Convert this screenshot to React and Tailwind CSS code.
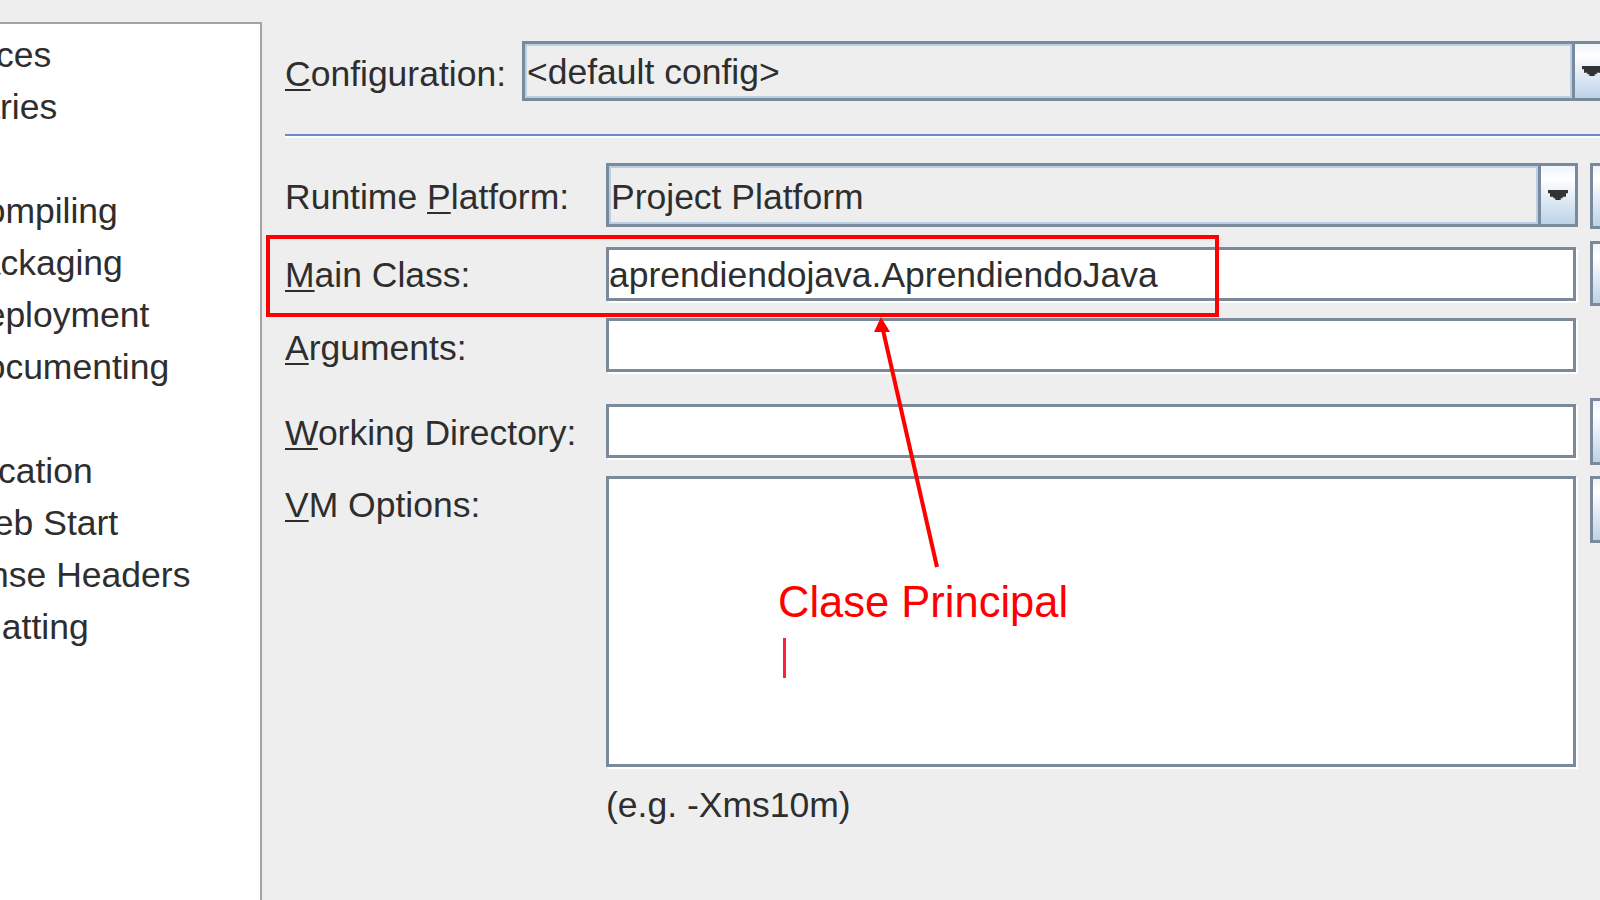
import React from 'react';

// category tree on the left, clipped by the panel edge
const categories = [
    { label: 'Sources', indent: '-ml-[79px]' },
    { label: 'Libraries', indent: '-ml-[79px]' },
    { label: 'Build', indent: '-ml-[80px]' },
    { label: 'Compiling', indent: '-ml-[40px]' },
    { label: 'Packaging', indent: '-ml-[43px]' },
    { label: 'Deployment', indent: '-ml-[40px]' },
    { label: 'Documenting', indent: '-ml-[40px]' },
    { label: 'Run', indent: '-ml-[80px]' },
    { label: 'Application', indent: '-ml-[81px]' },
    { label: 'Web Start', indent: '-ml-[39px]' },
    { label: 'License Headers', indent: '-ml-[76px]' },
    { label: 'Formatting', indent: '-ml-[81px]' },
];

const Mnemonic = ({ children }) => (
    <span className="underline decoration-2 underline-offset-[3px]">{children}</span>
);

const DownArrow = () => (
    <svg width="20" height="10" viewBox="0 0 20 10">
        <polygon
            fill="#333333"
            points="0,0 20,0 20,3.3 18,3.3 18,6.7 14.7,6.7 14.7,8.3 12.7,8.3 12.7,10 7.3,10 7.3,8.3 5.3,8.3 5.3,6.7 2,6.7 2,3.3 0,3.3"
        />
    </svg>
);

const ComboButton = () => (
    <div className="w-[37px] shrink-0 border-l-[3px] border-[#7b8a9a] bg-[linear-gradient(to_bottom,#eef4fa,#ffffff_22%,#bcd2e9)] flex items-center justify-center">
        <DownArrow />
    </div>
);

const SideButton = ({ height }) => (
    <div className={`ml-[12px] w-[40px] shrink-0 border-[3px] border-r-0 border-[#7b8a9a] bg-[linear-gradient(to_bottom,#eef4fa,#ffffff_22%,#bcd2e9)] ${height}`}></div>
);

const field = 'w-[970px] shrink-0 border-[3px] border-[#7b8a9a] bg-white shadow-[2px_2px_0_0_#ffffff]';

export default function App() {
    return (
        <div className="relative w-[1600px] h-[900px] overflow-hidden bg-[#eeeeee] flex font-['Liberation_Sans',Arial,sans-serif] text-[35.5px] text-[#2e2e2e]">
            {/* Categories */}
            <div className="w-[262px] shrink-0 mt-[22px] bg-white border-t-2 border-r-2 border-[#a3a3a3] pt-[5px] overflow-hidden">
                {categories.map((c) => (
                    <div key={c.label} className={`h-[52px] leading-[52px] whitespace-nowrap ${c.indent}`}>
                        {c.label}
                    </div>
                ))}
            </div>

            {/* Run settings */}
            <div className="flex-1 min-w-0 overflow-hidden pt-[41px] pl-[23px] leading-[40px]">
                <div className="flex items-start h-[60px]">
                    <div className="w-[237px] shrink-0 mt-[13px] whitespace-nowrap">
                        <Mnemonic>C</Mnemonic>onfiguration:
                    </div>
                    <div className="flex shrink-0 w-[1100px] h-[60px] border-[3px] border-[#7b8a9a]">
                        <div className="w-[1047px] shrink-0 border-2 border-[#b8cfe6] bg-[#eeeeee] pt-[6px] whitespace-nowrap">
                            &lt;default config&gt;
                        </div>
                        <ComboButton />
                    </div>
                </div>

                <div className="mt-[33px] h-[2px] bg-[#6a89c5]"></div>
                <div className="h-[2px] bg-white"></div>

                <div className="mt-[25px] flex items-start h-[66px]">
                    <div className="w-[321px] shrink-0 mt-[14px] whitespace-nowrap">
                        Runtime <Mnemonic>P</Mnemonic>latform:
                    </div>
                    <div className="flex shrink-0 w-[972px] h-[64px] border-[3px] border-[#7b8a9a]">
                        <div className="w-[929px] shrink-0 border-2 border-[#b8cfe6] bg-[#eeeeee] pt-[9px] whitespace-nowrap">
                            Project Platform
                        </div>
                        <ComboButton />
                    </div>
                    <SideButton height="h-[66px]" />
                </div>

                <div className="mt-[12px] flex items-start h-[65px]">
                    <div className="w-[321px] shrink-0 mt-[14px] whitespace-nowrap">
                        <Mnemonic>M</Mnemonic>ain Class:
                    </div>
                    <div className={`${field} mt-[6px] h-[54px] pt-[5px] whitespace-nowrap`}>
                        aprendiendojava.AprendiendoJava
                    </div>
                    <div className="ml-[2px]"></div>
                    <SideButton height="h-[65px]" />
                </div>

                <div className="mt-[12px] flex items-start h-[54px]">
                    <div className="w-[321px] shrink-0 mt-[10px] whitespace-nowrap">
                        <Mnemonic>A</Mnemonic>rguments:
                    </div>
                    <div className={`${field} h-[54px]`}></div>
                </div>

                <div className="mt-[26px] flex items-start h-[67px]">
                    <div className="w-[321px] shrink-0 mt-[15px] whitespace-nowrap">
                        <Mnemonic>W</Mnemonic>orking Directory:
                    </div>
                    <div className={`${field} mt-[6px] h-[54px]`}></div>
                    <div className="ml-[2px]"></div>
                    <SideButton height="h-[67px]" />
                </div>

                <div className="mt-[11px] flex items-start h-[291px]">
                    <div className="w-[321px] shrink-0 mt-[9px] whitespace-nowrap">
                        <Mnemonic>V</Mnemonic>M Options:
                    </div>
                    <div className={`${field} relative h-[291px]`}>
                        <div className="absolute left-[169px] top-[102px] text-[43.5px] leading-none text-[#ff0000] whitespace-nowrap">
                            Clase Principal
                        </div>
                        <div className="absolute left-[174px] top-[159px] w-[3px] h-[40px] bg-[#ff2040]"></div>
                    </div>
                    <div className="ml-[2px]"></div>
                    <SideButton height="h-[67px]" />
                </div>

                <div className="mt-[18px] ml-[321px] whitespace-nowrap">(e.g. -Xms10m)</div>
            </div>

            {/* annotation */}
            <div className="absolute left-[266px] top-[235px] w-[953px] h-[82px] border-4 border-[#ff0000] pointer-events-none"></div>
            <svg className="absolute left-0 top-0 pointer-events-none" width="1600" height="900" viewBox="0 0 1600 900">
                <line x1="937" y1="567" x2="883" y2="330" stroke="#ff0000" strokeWidth="4" />
                <polygon points="881,317 874,332 890,332" fill="#ff0000" />
            </svg>
        </div>
    );
}
